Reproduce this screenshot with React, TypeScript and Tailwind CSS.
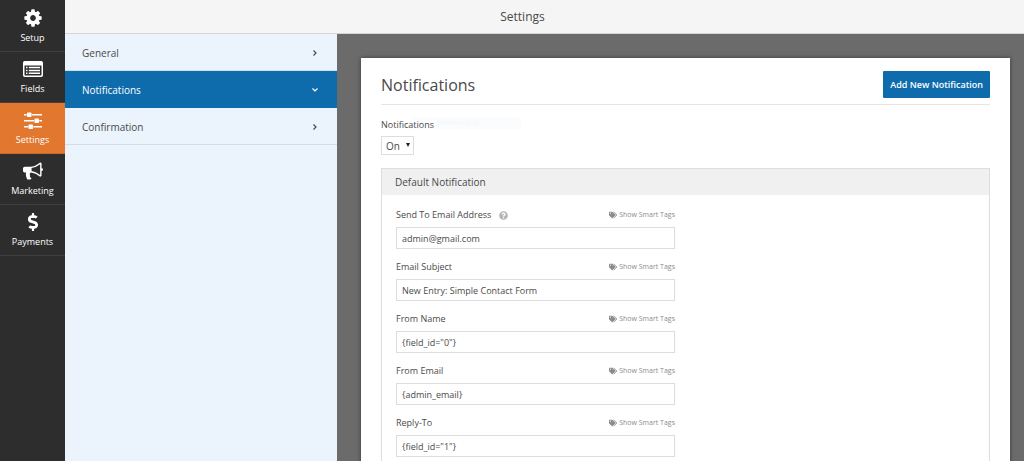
import React, { useState } from "react";
import { FaDollarSign, FaQuestionCircle, FaTags } from "react-icons/fa";

type IconProps = { className?: string };

const CogIcon = ({ className }: IconProps) => (
  <svg viewBox="96 96 1600 1600" className={className} fill="currentColor" aria-hidden="true">
    <path d="M1152 896q0-106-75-181t-181-75-181 75-75 181 75 181 181 75 181-75 75-181zm512-109v222q0 12-8 23t-20 13l-185 28q-19 54-39 91 35 50 107 138 10 12 10 25t-9 23q-27 37-99 108t-94 71q-12 0-26-9l-138-108q-44 23-91 38-16 136-29 186-7 28-36 28h-222q-14 0-24.5-8.5t-11.5-21.5l-28-184q-49-16-90-37l-141 107q-10 9-25 9-14 0-25-11-126-114-165-168-7-10-7-23 0-12 8-23 15-21 51-66.5t54-70.5q-27-50-41-99l-183-27q-13-2-21-12.5t-8-23.5v-222q0-12 8-23t19-13l186-28q14-46 39-92-40-57-107-138-10-12-10-24 0-10 9-23 26-36 98.5-107.5t94.5-71.5q13 0 26 10l138 107q44-23 91-38 16-136 29-186 7-28 36-28h222q14 0 24.5 8.5t11.5 21.5l28 184q49 16 90 37l142-107q9-9 24-9 13 0 25 10 129 119 165 170 7 8 7 22 0 12-8 23-15 21-51 66.5t-54 70.5q26 50 41 98l183 28q13 2 21 12.5t8 23.5z" />
  </svg>
);

const ListIcon = ({ className }: IconProps) => (
  <svg viewBox="0 0 20 16" className={className} fill="currentColor" aria-hidden="true">
    <path
      fillRule="evenodd"
      d="M1.8 0h16.4A1.8 1.8 0 0 1 20 1.8v12.4a1.8 1.8 0 0 1-1.8 1.8H1.8A1.8 1.8 0 0 1 0 14.2V1.8A1.8 1.8 0 0 1 1.8 0ZM1.5 4.6v9.2c0 .4.3.7.7.7h15.6c.4 0 .7-.3.7-.7V4.6Z"
    />
    <path d="M3 5.8h1.5v1.5H3zM5.8 5.8H17v1.5H5.8zM3 8.7h1.5v1.5H3zM5.8 8.7H17v1.5H5.8zM3 11.6h1.5v1.5H3zM5.8 11.6H17v1.5H5.8z" />
  </svg>
);

const SlidersIcon = ({ className }: IconProps) => (
  <svg viewBox="96 128 1600 1536" className={className} fill="currentColor" aria-hidden="true">
    <path d="M480 1408v128h-352v-128h352zm352-128q26 0 45 19t19 45v256q0 26-19 45t-45 19h-256q-26 0-45-19t-19-45v-256q0-26 19-45t45-19h256zm160-384v128h-864v-128h864zm-640-512v128h-224v-128h224zm1312 1024v128h-736v-128h736zm-960-1152q26 0 45 19t19 45v256q0 26-19 45t-45 19h-256q-26 0-45-19t-19-45v-256q0-26 19-45t45-19h256zm640 512q26 0 45 19t19 45v256q0 26-19 45t-45 19h-256q-26 0-45-19t-19-45v-256q0-26 19-45t45-19h256zm320 128v128h-224v-128h224zm0-512v128h-864v-128h864z" />
  </svg>
);

const BullhornIcon = ({ className }: IconProps) => (
  <svg viewBox="0 96 1792 1600" className={className} fill="currentColor" aria-hidden="true">
    <path d="M1664 640q53 0 90.5 37.5t37.5 90.5-37.5 90.5-90.5 37.5v384q0 52-38 90t-90 38q-417-347-812-380-58 19-91 66t-31 100.5 40 92.5q-20 33-23 65.5t6 58 33.5 55 48 50 61.5 50.5q-29 58-111.5 83t-168.5 11.5-132-55.5q-7-23-29.5-87.5t-32-94.5-23-89-15-101 3.5-98.5 22-110.5h-122q-66 0-113-47t-47-113v-192q0-66 47-113t113-47h480q435 0 896-384 52 0 90 38t38 90v384zm-128 604v-954q-394 302-768 343v270q377 42 768 341z" />
  </svg>
);

const Chevron = ({ open }: { open: boolean }) => (
  <svg
    viewBox="0 0 8 8"
    className={open ? "h-2 w-2 rotate-90" : "h-2 w-2"}
    fill="none"
    stroke="currentColor"
    strokeWidth="1.2"
    aria-hidden="true"
  >
    <path d="M2.5 1.5 5 4 2.5 6.5" />
  </svg>
);

const navItems = [
  { label: "Setup", icon: CogIcon },
  { label: "Fields", icon: ListIcon },
  { label: "Settings", icon: SlidersIcon },
  { label: "Marketing", icon: BullhornIcon },
  { label: "Payments", icon: FaDollarSign },
];

const sections = ["General", "Notifications", "Confirmation"];

const fields = [
  { id: "send-to", label: "Send To Email Address", value: "admin@gmail.com", help: true },
  { id: "subject", label: "Email Subject", value: "New Entry: Simple Contact Form" },
  { id: "from-name", label: "From Name", value: '{field_id="0"}' },
  { id: "from-email", label: "From Email", value: "{admin_email}" },
  { id: "reply-to", label: "Reply-To", value: '{field_id="1"}' },
];

const App = () => {
  const [activeNav, setActiveNav] = useState("Settings");
  const [activeSection, setActiveSection] = useState("Notifications");

  return (
    <div className="flex h-screen overflow-hidden bg-[#6b6b6b] font-['Open_Sans','Noto_Sans',sans-serif] text-[#4a4a4a]">
      <nav className="w-[65px] shrink-0 bg-[#2d2d2d] pt-px">
        {navItems.map(({ label, icon: Icon }) => (
          <button
            key={label}
            type="button"
            onClick={() => setActiveNav(label)}
            className={`flex h-[51px] w-full flex-col items-center border-b pt-2 text-[9px] leading-4 text-white ${
              activeNav === label ? "border-[#c8692a] bg-[#e27730]" : "border-[#404040]"
            }`}
          >
            <Icon className="h-[18px] w-5" />
            <span className="mt-[3px]">{label}</span>
          </button>
        ))}
      </nav>

      <div className="flex min-w-0 flex-1 flex-col">
        <header className="flex h-[34px] shrink-0 items-center justify-center border-b border-[#d5d5d5] bg-[#f5f5f5] pr-11">
          <h1 className="text-xs">Settings</h1>
        </header>

        <div className="flex min-h-0 flex-1">
          <aside className="w-[272px] shrink-0 bg-[#ebf3fc]">
            {sections.map((section) => (
              <button
                key={section}
                type="button"
                onClick={() => setActiveSection(section)}
                className={`flex h-[37px] w-full items-center justify-between border-b pt-0.5 pr-[18px] pl-[17px] text-[10px] ${
                  activeSection === section
                    ? "border-[#0e6cad] bg-[#0e6cad] text-white"
                    : "border-[#d3dde8]"
                }`}
              >
                {section}
                <Chevron open={activeSection === section} />
              </button>
            ))}
          </aside>

          <main className="min-w-0 flex-1 overflow-y-auto pt-6 pr-[14px] pl-6 [scrollbar-width:none]">
            <div className="bg-white px-5 pt-[13px] pb-5 shadow-[0_0_4px_rgba(0,0,0,0.5)]">
              <div className="flex items-center justify-between border-b border-[#e5e5e5] pb-[6px]">
                <h2 className="text-base">Notifications</h2>
                <button
                  type="button"
                  className="h-[27px] rounded-[1px] bg-[#0e6cad] px-[7px] text-[9px] font-semibold text-white"
                >
                  Add New Notification
                </button>
              </div>

              <div className="relative pt-3 text-[9px]">
                <div className="absolute top-3 left-[30px] h-3 w-[110px] bg-[#fbfcfe] pl-[26px] text-[7px] leading-3 text-[#f4f6f9]">
                  Window Snip
                </div>
                <label htmlFor="notifications" className="relative block leading-4">
                  Notifications
                </label>
                <div className="relative mt-[3px] w-[33px]">
                  <select
                    id="notifications"
                    defaultValue="On"
                    className="block h-[19px] w-full appearance-none border border-[#ddd] bg-white pl-1 text-[10px] leading-4"
                  >
                    <option>On</option>
                    <option>Off</option>
                  </select>
                  <svg
                    viewBox="0 0 4 4"
                    className="pointer-events-none absolute top-[7px] right-1 h-1 w-1"
                    fill="#222"
                    aria-hidden="true"
                  >
                    <path d="M0 0h4L2 4z" />
                  </svg>
                </div>
              </div>

              <section className="mt-[13px] border border-[#ddd]">
                <h3 className="bg-[#f0f0f0] px-[13px] text-[10px] leading-[26px]">Default Notification</h3>
                <div className="flex flex-col gap-[10px] px-[14px] pt-3 pb-5">
                  {fields.map((field) => (
                    <div key={field.id} className="w-[279px]">
                      <div className="flex h-4 items-center text-[9px]">
                        <label htmlFor={field.id}>{field.label}</label>
                        {field.help && <FaQuestionCircle className="ml-2 h-[9px] w-[9px] text-[#b5b5b5]" />}
                        <a href="#" className="ml-auto flex items-center gap-[2px] text-[7px] text-[#8c8c8c]">
                          <FaTags className="h-2 w-2" />
                          Show Smart Tags
                        </a>
                      </div>
                      <input
                        id={field.id}
                        type="text"
                        defaultValue={field.value}
                        className="mt-1 block h-[22px] w-full border border-[#ddd] bg-white px-[5px] text-[9px]"
                      />
                    </div>
                  ))}
                </div>
              </section>
            </div>
          </main>
        </div>
      </div>
    </div>
  );
};

export default App;
